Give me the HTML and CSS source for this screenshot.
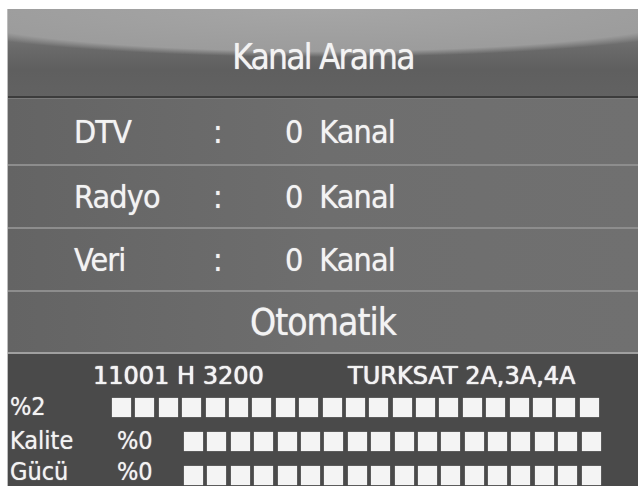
FILE: index.html
```html
<!DOCTYPE html>
<html lang="tr">
<head>
<meta charset="utf-8">
<title>Kanal Arama</title>
<link rel="stylesheet" href="styles.css">
</head>
<body>
<div class="panel">
  <div class="header"><span class="title">Kanal Arama</span></div>
  <div class="row first">
    <span class="label">DTV</span><span class="colon">:</span><span class="value">0&nbsp;&nbsp;Kanal</span>
  </div>
  <div class="row">
    <span class="label">Radyo</span><span class="colon">:</span><span class="value">0&nbsp;&nbsp;Kanal</span>
  </div>
  <div class="row">
    <span class="label">Veri</span><span class="colon">:</span><span class="value">0&nbsp;&nbsp;Kanal</span>
  </div>
  <div class="row mode">Otomatik</div>
  <div class="status">
    <div class="tp"><span class="freq">11001 H 3200</span><span class="sat">TURKSAT 2A,3A,4A</span></div>
    <div class="meter progress">
      <span class="mlabel wide">%2</span>
      <div class="bar" id="bar1"></div>
    </div>
    <div class="meter">
      <span class="mlabel">Kalite</span><span class="pct">%0</span>
      <div class="bar" id="bar2"></div>
    </div>
    <div class="meter last">
      <span class="mlabel">Gücü</span><span class="pct">%0</span>
      <div class="bar" id="bar3"></div>
    </div>
  </div>
</div>
<script>
  [["bar1",21],["bar2",18],["bar3",18]].forEach(function(b){
    var el=document.getElementById(b[0]);
    for(var i=0;i<b[1];i++){var s=document.createElement("span");s.className="sq";el.appendChild(s);}
  });
</script>
</body>
</html>
```
FILE: styles.css
```css
html, body {
  margin: 0;
  padding: 0;
  background: #ffffff;
}
body {
  padding: 9px 6px 0 7px;
  font-family: "DejaVu Sans Condensed", "DejaVu Sans", sans-serif;
  color: #f3f3f3;
}
.panel {
  width: 630px;
  background: #4a4a4a;
  border-left: 1px solid #bdbdbd;
}
.header {
  height: 87px;
  display: flex;
  align-items: center;
  justify-content: center;
  background:
    radial-gradient(ellipse 430px 48px at 50% 0, #a6a6a6 0%, #9c9c9c 88%, rgba(140,140,140,0) 100%),
    linear-gradient(#8a8a8a 0, #6a6a6a 45%, #5f5f5f 70%, #626262 100%);
  border-bottom: 2px solid #3c3c3c;
}
.title {
  font-size: 35px;
  letter-spacing: -1.8px;
  padding-top: 8px;
  text-shadow: 0 0 1px rgba(255,255,255,0.7);
}
.row {
  height: 61px;
  display: grid;
  grid-template-columns: 139px 72px auto;
  align-items: center;
  padding-left: 66px;
  font-size: 32px;
  letter-spacing: -0.8px;
  background: linear-gradient(90deg, #646464, #6e6e6e 50%, #707070);
  border-top: 2px solid #8d8d8d;
  text-shadow: 0 0 1px rgba(255,255,255,0.7);
}
.row.first {
  height: 65px;
  border-top: 1px solid #7a7a7a;
}
.mode {
  display: flex;
  justify-content: center;
  padding-left: 0;
  height: 60px;
  font-size: 37px;
  letter-spacing: -1px;
}
.status {
  background: #4a4a4a;
  border-top: 2px solid #a0a0a0;
  padding-top: 8px;
}
.tp {
  display: flex;
  font-family: "DejaVu Sans", sans-serif;
  font-size: 24px;
  height: 28px;
  line-height: 28px;
  padding-left: 85px;
  text-shadow: 0 0 1px rgba(255,255,255,0.9), 0 0 1px rgba(255,255,255,0.9);
}
.tp .freq { width: 255px; }
.meter {
  display: flex;
  align-items: center;
  height: 34px;
  line-height: 22px;
  font-size: 25px;
  padding-left: 2px;
  text-shadow: 0 0 1px rgba(255,255,255,0.7);
}
.meter.last {
  height: 28px;
}
.meter.last .bar {
  align-self: flex-end;
  margin-bottom: 1px;
}
.mlabel { width: 107px; }
.mlabel.wide { width: 102px; }
.pct { width: 67px; }
.bar {
  display: flex;
  gap: 4.4px;
}
.sq {
  width: 19px;
  height: 19px;
  background: #f4f4f4;
  box-shadow: 0 0 1px rgba(255,255,255,0.6);
}
```
